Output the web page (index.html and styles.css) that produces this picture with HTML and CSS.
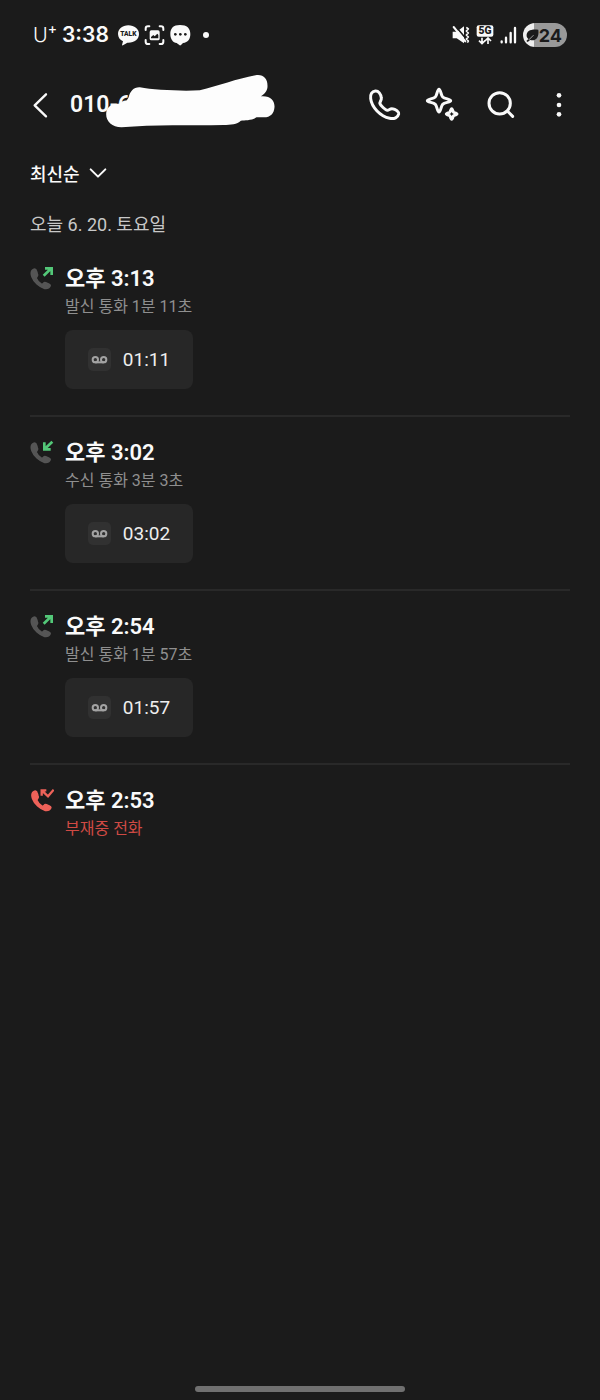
FILE: index.html
```html
<!DOCTYPE html>
<html lang="ko">
<head>
    <meta charset="utf-8">
    <meta name="viewport" content="width=device-width, initial-scale=1">
    <title>통화 기록</title>
    <link rel="stylesheet" href="styles.css">
</head>
<body>
<svg class="sprite" width="0" height="0">
    <symbol id="handset" viewBox="30 30 75 75">
        <path d="M42 43C35 46 32 54 36 65C42 81 58 96 74 100C82 101 88 98 90 93C91 91 90 89 87 88L77 83C74 82 72 83 70 86L66 89C59 85 51 77 48 69L51 64C53 62 53 60 52 57L49 47C48 43 45 42 42 43Z"/>
    </symbol>
    <symbol id="tape" viewBox="0 0 69 69">
        <rect width="69" height="69" rx="15" fill="#313131"/>
        <g fill="none" stroke="#a3a3a3" stroke-width="6">
            <circle cx="22" cy="35" r="8"/>
            <circle cx="47" cy="35" r="8"/>
            <path d="M21 43H48"/>
        </g>
    </symbol>
</svg>
<div class="status">
    <div class="status-left">
        <span class="carrier">U<sup>+</sup></span>
        <span class="clock">3:38</span>
        <svg class="noti" viewBox="294 43 63 63">
            <path fill="#fafafa" d="M325 44C307 44 294 55 294 70C294 80 300 88 309 92L306 103Q306 105 309 104L322 96C343 97 357 86 357 70C357 55 343 44 325 44Z"/>
            <text class="talk" x="325" y="77" text-anchor="middle">TALK</text>
        </svg>
        <svg class="noti" viewBox="373 43 63 63">
            <path fill="none" stroke="#fafafa" stroke-width="6" stroke-linecap="round" d="M378 58V54Q378 47 385 47H389M420 47H424Q431 47 431 54V58M431 88V93Q431 100 424 100H420M389 100H385Q378 100 378 93V88"/>
            <rect x="390" y="59" width="30" height="30" rx="5" fill="#fafafa"/>
            <path fill="#1b1b1b" d="M394 83V79L401 73L405 77L413 69L416 73V83Z"/>
        </svg>
        <svg class="noti" viewBox="452 43 63 63">
            <path fill="#fafafa" d="M482 43C462 43 453 53 453 70C453 86 461 96 472 97L481 104Q483 105 485 103L491 97C506 95 513 86 513 70C513 53 503 43 482 43Z"/>
            <g fill="#1b1b1b"><circle cx="468" cy="71" r="4"/><circle cx="483" cy="71" r="4"/><circle cx="498" cy="71" r="4"/></g>
        </svg>
        <span class="more-dot"></span>
    </div>
    <div class="status-right">
        <svg width="18" height="20" viewBox="62 43 54 60">
            <path fill="#fafafa" d="M64 63H76L98 47V98L76 83H64Z"/>
            <path stroke="#1b1b1b" stroke-width="5" d="M72 46L108 89"/>
            <path fill="none" stroke="#fafafa" stroke-width="6" stroke-linecap="round" d="M67 49L102 92"/>
            <path fill="none" stroke="#fafafa" stroke-width="5" stroke-linejoin="round" d="M105 50L111 55L105 61L111 67L105 73L111 79L105 85L111 91L108 96"/>
        </svg>
        <svg width="18" height="20" viewBox="138 41 54 60">
            <rect x="140" y="42" width="50" height="34" rx="6" fill="#fafafa"/>
            <text class="net" x="165" y="69" text-anchor="middle">5G</text>
            <path fill="none" stroke="#fafafa" stroke-width="5" d="M156 79V96M147 88L156 97L165 88M174 98V81M165 89L174 80L183 89"/>
        </svg>
        <svg width="17" height="20" viewBox="209 42 51 60">
            <path stroke="#fafafa" stroke-width="7" stroke-linecap="round" d="M214 91V94M227 80V94M241 66V94M254 51V94"/>
        </svg>
        <div class="battery">
            <svg width="13" height="13" viewBox="288 54 38 38">
                <path fill="#1b1b1b" d="M324 56C301 53 288 60 290 76Q291 80 295 83L289 89L293 92L300 86C317 91 327 78 324 56Z"/>
                <path stroke="#ddd" stroke-width="2" d="M296 86L310 72"/>
            </svg>
            <span>24</span>
        </div>
    </div>
</div>

<header class="header">
    <button class="back" aria-label="뒤로">
        <svg width="17" height="26" viewBox="0 0 51 78"><path fill="none" stroke="#fafafa" stroke-width="7" stroke-linecap="round" stroke-linejoin="round" d="M42 7L8 40L42 73"/></svg>
    </button>
    <h1 class="number">010-6
        <svg class="scribble" viewBox="255 28 512 162">
            <path fill="#fdfdfd" d="M293 117C313 116 322 107 326 96C330 80 341 67 359 68C401 76 483 80 539 77C594 64 650 42 706 32C729 28 742 42 742 63C743 78 733 89 722 95C751 92 764 109 763 127C762 147 750 158 732 158H709C693 168 674 166 662 168C651 180 632 180 610 181C511 183 402 179 304 188C276 188 258 171 258 149C258 129 270 118 293 117Z"/>
        </svg>
    </h1>
    <nav class="actions">
        <button aria-label="전화">
            <svg viewBox="50 37 108 108"><path d="M75 49C65 50 59 58 61 72C64 98 90 125 118 131C132 134 143 128 145 118C146 112 136 103 126 102C118 101 116 108 111 107C104 105 91 93 89 87C87 82 94 78 93 70C92 58 84 48 75 49Z"/></svg>
        </button>
        <button aria-label="AI">
            <svg viewBox="224 37 108 108">
                <path d="M266 44C271 44 272 62 277 67C283 73 301 73 301 78C301 83 283 83 277 89C272 94 271 112 266 112C261 112 260 94 255 89C249 83 231 83 231 78C231 73 249 73 255 67C260 62 261 44 266 44Z"/>
                <path d="M304 102Q306 102 308 110Q309 113 312 114Q320 116 320 118Q320 120 312 122Q309 123 308 126Q306 134 304 134Q302 134 300 126Q299 123 296 122Q288 120 288 118Q288 116 296 114Q299 113 300 110Q302 102 304 102Z"/>
            </svg>
        </button>
        <button aria-label="검색">
            <svg viewBox="399 37 108 108"><circle cx="449" cy="86" r="32"/><path d="M472 109L488 125"/></svg>
        </button>
        <button aria-label="더보기">
            <svg class="dots" viewBox="574 37 108 108"><circle cx="628" cy="62" r="7"/><circle cx="628" cy="91" r="7"/><circle cx="628" cy="119" r="7"/></svg>
        </button>
    </nav>
</header>

<main>
    <button class="sort">최신순
        <svg width="18" height="12" viewBox="0 0 54 36"><path fill="none" stroke="#fafafa" stroke-width="6" stroke-linecap="round" stroke-linejoin="round" d="M5 7L27 29L49 7"/></svg>
    </button>
    <h2 class="date">오늘 6. 20. 토요일</h2>
    <ul class="calls">
        <li class="call">
            <svg class="type" viewBox="30 33 72 72">
                <use href="#handset" x="30" y="30" width="75" height="75"/>
                <path class="arrow" d="M71 62L94 40M75 40H95V60"/>
            </svg>
            <div class="info">
                <h3>오후 3:13</h3>
                <p>발신 통화 1분 11초</p>
                <button class="record"><svg width="23" height="23"><use href="#tape"/></svg>01:11</button>
            </div>
        </li>
        <li class="call">
            <svg class="type" viewBox="30 33 72 72">
                <use href="#handset" x="30" y="30" width="75" height="75"/>
                <path class="arrow" d="M97 38L74 60M73 40V61H92"/>
            </svg>
            <div class="info">
                <h3>오후 3:02</h3>
                <p>수신 통화 3분 3초</p>
                <button class="record"><svg width="23" height="23"><use href="#tape"/></svg>03:02</button>
            </div>
        </li>
        <li class="call">
            <svg class="type" viewBox="30 33 72 72">
                <use href="#handset" x="30" y="30" width="75" height="75"/>
                <path class="arrow" d="M71 62L94 40M75 40H95V60"/>
            </svg>
            <div class="info">
                <h3>오후 2:54</h3>
                <p>발신 통화 1분 57초</p>
                <button class="record"><svg width="23" height="23"><use href="#tape"/></svg>01:57</button>
            </div>
        </li>
        <li class="call missed">
            <svg class="type" viewBox="30 33 72 72">
                <use href="#handset" x="32" y="30" width="75" height="75"/>
                <path class="arrow" d="M65 56V40H79M66 41L84 58L101 38"/>
            </svg>
            <div class="info">
                <h3>오후 2:53</h3>
                <p>부재중 전화</p>
            </div>
        </li>
    </ul>
</main>
<div class="home-bar"></div>
</body>
</html>
```

FILE: styles.css
```css
* {
    box-sizing: border-box;
}

body {
    margin: 0;
    min-height: 100vh;
    display: flex;
    flex-direction: column;
    background-color: #1b1b1b;
    color: #fafafa;
    font-family: Roboto, "Noto Sans CJK KR", sans-serif;
}

h1, h2, h3, p, ul {
    margin: 0;
    padding: 0;
}

button {
    padding: 0;
    border: none;
    background: none;
    color: inherit;
    font-family: inherit;
    cursor: pointer;
}

svg {
    display: block;
    flex-shrink: 0;
}

.sprite {
    position: absolute;
}

.status {
    height: 70px;
    padding: 0 33px;
    display: flex;
    justify-content: space-between;
    align-items: center;
}

.status-left, .status-right {
    display: flex;
    align-items: center;
}

.status-left {
    gap: 5px;
}

.status-right {
    gap: 6px;
}

.carrier {
    width: 24px;
    font-family: Inter, sans-serif;
    font-size: 20px;
    font-weight: 300;
    line-height: 24px;
    white-space: nowrap;
}

.carrier sup {
    font-size: 14px;
    font-weight: 500;
    line-height: 0;
}

.clock {
    margin-right: 4px;
    font-family: Inter, sans-serif;
    font-size: 21px;
    font-weight: 600;
    line-height: 28px;
}

.noti {
    width: 21px;
    height: 21px;
}

.talk, .net {
    font-family: Roboto, sans-serif;
    font-weight: 900;
    fill: #1b1b1b;
}

.talk {
    font-size: 20px;
}

.net {
    font-size: 31px;
}

.more-dot {
    width: 6px;
    height: 6px;
    margin-left: 7px;
    border-radius: 50%;
    background-color: #fafafa;
}

.battery {
    height: 24px;
    padding: 0 5px 0 3px;
    display: flex;
    align-items: center;
    border-radius: 12px;
    background: linear-gradient(to right, #eee 24%, #999 24%);
    color: #1b1b1b;
    font-family: Inter, sans-serif;
    font-size: 18px;
    font-weight: 700;
}

.header {
    height: 70px;
    padding: 0 12px 0 20px;
    display: flex;
    align-items: center;
}

.back {
    width: 50px;
    height: 48px;
    padding-left: 12px;
}

.number {
    position: relative;
    flex: 1;
    font-size: 23px;
    font-weight: 600;
    line-height: 34px;
}

.scribble {
    position: absolute;
    top: -14px;
    left: 35px;
    width: 171px;
    height: 54px;
}

.actions {
    display: flex;
}

.actions button {
    width: 58px;
    height: 48px;
    display: flex;
    justify-content: center;
    align-items: center;
}

.actions svg {
    width: 36px;
    height: 36px;
    fill: none;
    stroke: #fafafa;
    stroke-width: 9;
    stroke-linecap: round;
    stroke-linejoin: round;
}

.actions .dots {
    fill: #fafafa;
    stroke: none;
}

main {
    flex: 1;
    padding: 0 30px;
}

.sort {
    height: 66px;
    display: flex;
    align-items: center;
    gap: 9px;
    font-size: 18px;
    font-weight: 500;
}

.date {
    padding-top: 1px;
    color: #c8c8c8;
    font-size: 18px;
    font-weight: 400;
    line-height: 36px;
}

.calls {
    list-style: none;
}

.call {
    padding: 22px 0 26px;
    display: flex;
    gap: 11px;
    border-bottom: 2px solid #292929;
}

.call:last-child {
    border-bottom: none;
}

.type {
    width: 24px;
    height: 24px;
    margin-top: 1px;
    fill: #555;
    stroke: #555;
    stroke-width: 5;
    stroke-linejoin: round;
}

.arrow {
    fill: none;
    stroke: #53c878;
    stroke-width: 8;
    stroke-linejoin: miter;
}

.info h3 {
    font-size: 22px;
    font-weight: 600;
    line-height: 28px;
}

.info p {
    color: #8f8f8f;
    font-size: 16px;
    line-height: 28px;
}

.record {
    width: 128px;
    height: 59px;
    margin-top: 9px;
    display: flex;
    justify-content: center;
    align-items: center;
    gap: 12px;
    border-radius: 8px;
    background-color: #272727;
    color: #eee;
    font-size: 19px;
}

.missed .type {
    fill: #ee6259;
    stroke: #ee6259;
}

.missed .arrow {
    stroke: #ee6259;
    stroke-width: 7;
}

.missed p {
    color: #d04a44;
}

.home-bar {
    width: 35%;
    height: 6px;
    margin: 0 auto 8px;
    border-radius: 3px;
    background-color: #707070;
}
```
